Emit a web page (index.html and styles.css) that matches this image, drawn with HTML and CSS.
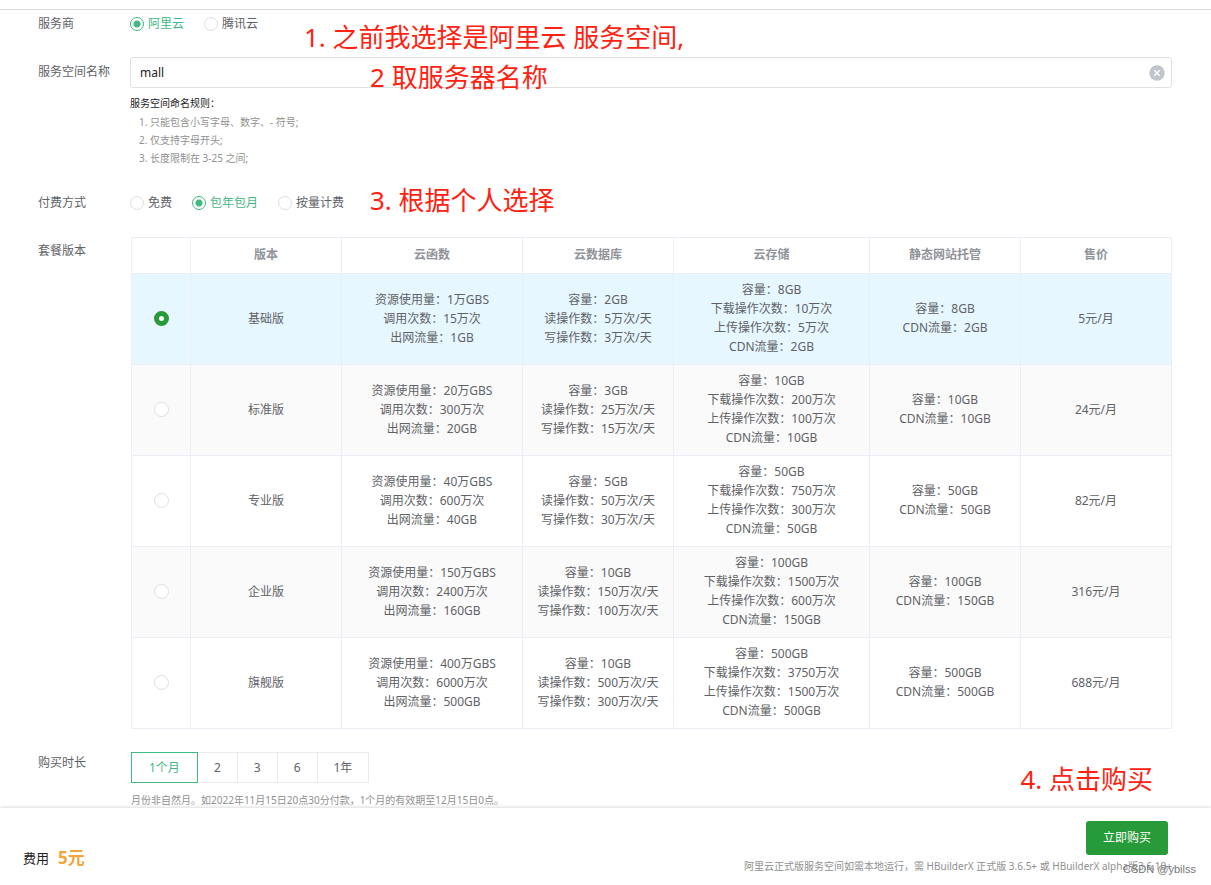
FILE: index.html
```html
<!DOCTYPE html>
<html lang="zh-CN">
<head>
<meta charset="utf-8">
<meta name="viewport" content="width=device-width, initial-scale=1">
<title>服务空间</title>
<link rel="stylesheet" href="styles.css">
</head>
<body>
<form class="page">
  <main class="form">
    <div class="row row-vendor">
      <span class="row-label">服务商</span>
      <div class="row-body radios">
        <label class="radio"><input type="radio" name="vendor" checked><span>阿里云</span></label>
        <label class="radio"><input type="radio" name="vendor"><span>腾讯云</span></label>
      </div>
      <p class="note note-1">1. 之前我选择是阿里云 服务空间,</p>
    </div>

    <div class="row row-name">
      <label class="row-label" for="space-name">服务空间名称</label>
      <div class="row-body">
        <div class="textbox">
          <input id="space-name" type="text" value="mall">
          <button class="clear" type="button" aria-label="清空">
            <svg viewBox="0 0 16 16" width="16" height="16"><circle cx="8" cy="8" r="7.7" fill="#c0c4cc"/><path d="M5.3 5.3l5.4 5.4M10.7 5.3l-5.4 5.4" stroke="#fff" stroke-width="1.4"/></svg>
          </button>
        </div>
        <p class="rules-title">服务空间命名规则：</p>
        <ol class="rules">
          <li>只能包含小写字母、数字、- 符号;</li>
          <li>仅支持字母开头;</li>
          <li>长度限制在 3-25 之间;</li>
        </ol>
      </div>
      <p class="note note-2">2 取服务器名称</p>
    </div>

    <div class="row row-pay">
      <span class="row-label">付费方式</span>
      <div class="row-body radios">
        <label class="radio"><input type="radio" name="pay"><span>免费</span></label>
        <label class="radio"><input type="radio" name="pay" checked><span>包年包月</span></label>
        <label class="radio"><input type="radio" name="pay"><span>按量计费</span></label>
      </div>
      <p class="note note-3">3. 根据个人选择</p>
    </div>

    <div class="row row-plan">
      <span class="row-label">套餐版本</span>
      <div class="row-body inset">
        <table class="plans">
          <colgroup><col class="c-pick"><col class="c-std"><col class="c-func"><col class="c-std"><col class="c-store"><col class="c-std"><col class="c-std"></colgroup>
          <thead>
            <tr><th></th><th>版本</th><th>云函数</th><th>云数据库</th><th>云存储</th><th>静态网站托管</th><th>售价</th></tr>
          </thead>
          <tbody>
            <tr class="selected">
              <td><input type="radio" name="plan" aria-label="基础版" checked></td><td>基础版</td>
              <td>资源使用量：1万GBS<br>调用次数：15万次<br>出网流量：1GB</td>
              <td>容量：2GB<br>读操作数：5万次/天<br>写操作数：3万次/天</td>
              <td>容量：8GB<br>下载操作次数：10万次<br>上传操作次数：5万次<br>CDN流量：2GB</td>
              <td>容量：8GB<br>CDN流量：2GB</td><td>5元/月</td>
            </tr>
            <tr>
              <td><input type="radio" name="plan" aria-label="标准版"></td><td>标准版</td>
              <td>资源使用量：20万GBS<br>调用次数：300万次<br>出网流量：20GB</td>
              <td>容量：3GB<br>读操作数：25万次/天<br>写操作数：15万次/天</td>
              <td>容量：10GB<br>下载操作次数：200万次<br>上传操作次数：100万次<br>CDN流量：10GB</td>
              <td>容量：10GB<br>CDN流量：10GB</td><td>24元/月</td>
            </tr>
            <tr>
              <td><input type="radio" name="plan" aria-label="专业版"></td><td>专业版</td>
              <td>资源使用量：40万GBS<br>调用次数：600万次<br>出网流量：40GB</td>
              <td>容量：5GB<br>读操作数：50万次/天<br>写操作数：30万次/天</td>
              <td>容量：50GB<br>下载操作次数：750万次<br>上传操作次数：300万次<br>CDN流量：50GB</td>
              <td>容量：50GB<br>CDN流量：50GB</td><td>82元/月</td>
            </tr>
            <tr>
              <td><input type="radio" name="plan" aria-label="企业版"></td><td>企业版</td>
              <td>资源使用量：150万GBS<br>调用次数：2400万次<br>出网流量：160GB</td>
              <td>容量：10GB<br>读操作数：150万次/天<br>写操作数：100万次/天</td>
              <td>容量：100GB<br>下载操作次数：1500万次<br>上传操作次数：600万次<br>CDN流量：150GB</td>
              <td>容量：100GB<br>CDN流量：150GB</td><td>316元/月</td>
            </tr>
            <tr>
              <td><input type="radio" name="plan" aria-label="旗舰版"></td><td>旗舰版</td>
              <td>资源使用量：400万GBS<br>调用次数：6000万次<br>出网流量：500GB</td>
              <td>容量：10GB<br>读操作数：500万次/天<br>写操作数：300万次/天</td>
              <td>容量：500GB<br>下载操作次数：3750万次<br>上传操作次数：1500万次<br>CDN流量：500GB</td>
              <td>容量：500GB<br>CDN流量：500GB</td><td>688元/月</td>
            </tr>
          </tbody>
        </table>
      </div>
    </div>

    <div class="row row-term">
      <span class="row-label">购买时长</span>
      <div class="row-body inset">
        <div class="terms">
          <button type="button" class="term active">1个月</button>
          <button type="button" class="term">2</button>
          <button type="button" class="term">3</button>
          <button type="button" class="term">6</button>
          <button type="button" class="term">1年</button>
        </div>
        <p class="term-hint">月份非自然月。如2022年11月15日20点30分付款，1个月的有效期至12月15日0点。</p>
      </div>
      <p class="note note-4">4. 点击购买</p>
    </div>
  </main>

  <footer class="bar">
    <p class="cost">费用<strong>5元</strong></p>
    <div class="checkout">
      <button type="submit" class="buy">立即购买</button>
      <p class="version">阿里云正式版服务空间如需本地运行，需 HBuilderX 正式版 3.6.5+ 或 HBuilderX alpha版3.6.10+</p>
    </div>
    <span class="watermark">CSDN @ybilss</span>
  </footer>
</form>
</body>
</html>
```
FILE: styles.css
```css
* { box-sizing: border-box; }

body {
  margin: 0;
  background: #fff;
  color: #606266;
  font: 12px/20px "Noto Sans", "Noto Sans CJK SC", sans-serif;
}

p, ol { margin: 0; padding: 0; }
button, input { font: inherit; color: inherit; margin: 0; }
button { cursor: pointer; }

.page {
  display: flex;
  flex-direction: column;
  min-height: 100vh;
  padding-top: 9px;
}

.form {
  border-top: 1px solid #dcdcdc;
  padding: 4px 39px 0 38px;
}

.row { display: flex; position: relative; }
.row-label { flex: 0 0 92px; white-space: nowrap; }
.row-body { flex: 1; min-width: 0; }
.inset { padding: 0 2px 0 1px; }

.row-name { margin-top: 23px; }
.row-name .row-label { padding-top: 5px; }
.row-pay { margin-top: 26px; }
.row-plan { margin-top: 24px; }
.row-plan .row-label { padding-top: 4px; }
.row-term { margin-top: 23px; }
.row-term .row-label { padding-top: 1px; }

.radios { display: flex; gap: 20px; }
.radio { display: flex; align-items: center; gap: 4px; }
.radio:has(:checked) { color: #42b983; }

input[type="radio"] {
  appearance: none;
  display: block;
  width: 14px;
  height: 14px;
  border: 1px solid #dcdfe6;
  border-radius: 50%;
  background: #fff;
}
.radio input[type="radio"]:checked {
  border-color: #42b983;
  background: radial-gradient(circle, #42b983 3px, #fff 4px);
}

.textbox {
  display: flex;
  align-items: center;
  height: 31px;
  padding: 0 6px 0 9px;
  border: 1px solid #dfe0e2;
  border-radius: 3px;
}
.textbox input {
  flex: 1;
  min-width: 0;
  padding: 0;
  border: 0;
  outline: 0;
  background: none;
  color: #222;
}
.clear { display: flex; padding: 0; border: 0; background: none; }

.rules-title {
  margin-top: 5px;
  color: #222;
  font-size: 10px;
  line-height: 20px;
}
.rules {
  padding-left: 20px;
  color: #909090;
  font-size: 10px;
  line-height: 18px;
}

.plans {
  width: 100%;
  table-layout: fixed;
  border-collapse: collapse;
  text-align: center;
  line-height: 19px;
}
.c-pick { width: 59px; }
.c-std { width: 151px; }
.c-func { width: 181px; }
.c-store { width: 196px; }
.plans th, .plans td { border: 1px solid #ebeef5; padding: 6px 0 8px; }
.plans th { height: 36px; color: #909399; font-weight: 700; }
.plans tbody tr:nth-child(even) { background: #fafafa; }
.plans tbody tr.selected { background: #e6f7ff; }
.plans input[type="radio"] { width: 15px; height: 15px; margin: 0 auto; }
.plans input[type="radio"]:checked { border: 5px solid #279a39; }

.terms { display: flex; }
.term {
  height: 31px;
  padding: 0 16px;
  border: 1px solid #ebebeb;
  border-left-width: 0;
  background: #fff;
}
.term.active { padding: 0 17px; border: 1px solid #42b983; color: #42b983; }
.term-hint { margin-top: 9px; color: #909090; font-size: 10px; line-height: 16px; }

.bar {
  display: flex;
  flex: 1;
  justify-content: space-between;
  align-items: flex-start;
  position: relative;
  padding: 13px 39px 10px 23px;
  background: #fff;
  box-shadow: 0 -1px 3px rgba(0, 0, 0, 0.14);
}
.cost {
  display: flex;
  align-items: center;
  gap: 9px;
  margin-top: 27px;
  color: #222;
  font-size: 13px;
}
.cost strong { color: #f3a53c; font-size: 17px; }
.checkout { display: flex; flex-direction: column; align-items: flex-end; }
.buy {
  height: 34px;
  margin-right: 4px;
  padding: 0 17px;
  border: 0;
  border-radius: 3px;
  background: #279a39;
  color: #fff;
}
.version { margin-top: 2px; color: #909090; font-size: 10px; line-height: 18px; }

/* Handwritten steps laid over the form */
.note {
  position: absolute;
  color: #ff2211;
  font-size: 26px;
  line-height: 32px;
  white-space: nowrap;
}
.note-1 { left: 266px; top: 7px; }
.note-2 { left: 332px; top: 4px; }
.note-3 { left: 332px; top: -9px; }
.note-4 { right: 19px; top: 11px; }

.watermark {
  position: absolute;
  right: 15px;
  bottom: 6px;
  color: #777;
  font: 11px/20px "Liberation Sans", sans-serif;
}
```
